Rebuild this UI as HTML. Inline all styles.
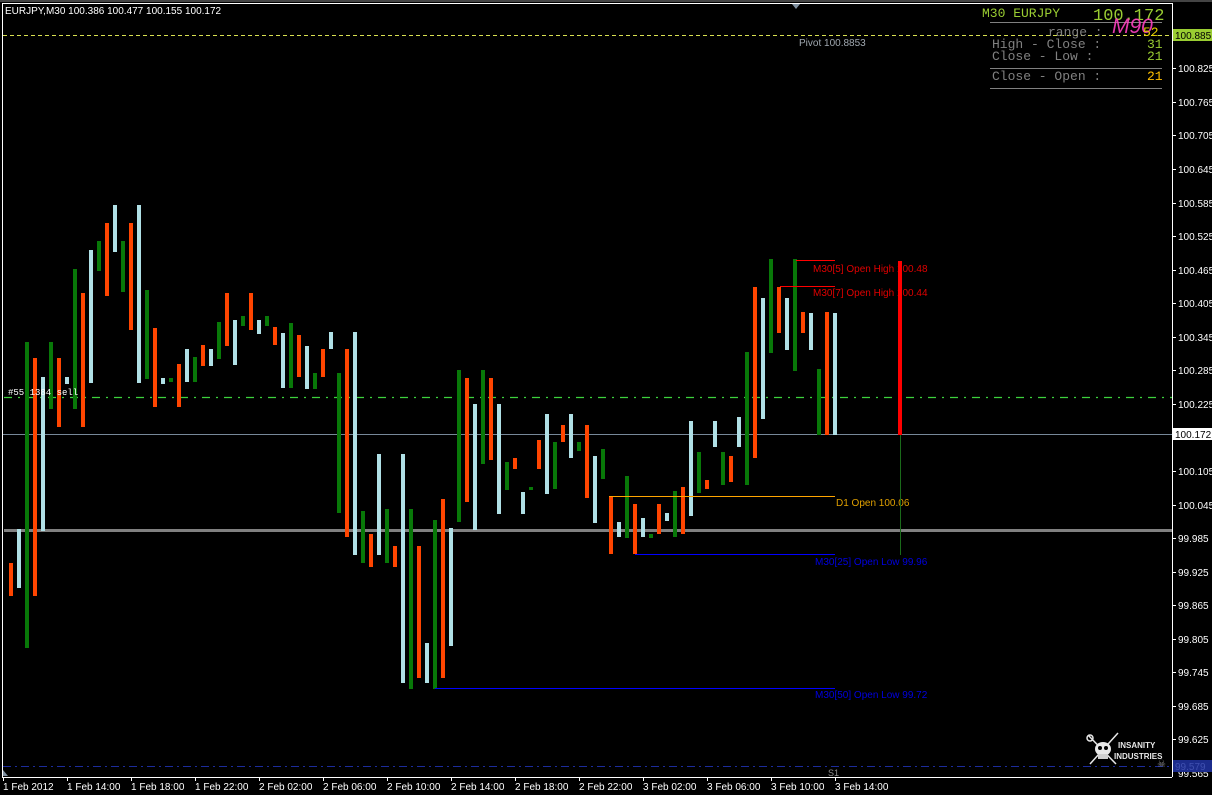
<!DOCTYPE html>
<html><head><meta charset="utf-8">
<style>
html,body{margin:0;padding:0;background:#000;width:1212px;height:795px;overflow:hidden}
svg{display:block}
text{font-family:"Liberation Sans",sans-serif}
.ax{fill:#fff;font-size:10px}
.mono{font-family:"Liberation Mono",monospace}
</style></head><body>
<svg width="1212" height="795" viewBox="0 0 1212 795" xmlns="http://www.w3.org/2000/svg">
<rect width="1212" height="795" fill="#000"/>
<rect x="0" y="0" width="1212" height="2" fill="#444"/>
<line x1="2.5" y1="3.5" x2="1172.5" y2="3.5" stroke="#fff"/>
<line x1="2.5" y1="3" x2="2.5" y2="777" stroke="#fff"/>
<line x1="1172.5" y1="3" x2="1172.5" y2="777" stroke="#fff"/>
<line x1="2" y1="777.5" x2="1172" y2="777.5" stroke="#fff"/>
<polygon points="792,4 800,4 796,9" fill="#8090a0"/>

<line x1="3" y1="35.5" x2="1172" y2="35.5" stroke="#d8e050" stroke-dasharray="4,3"/>
<text x="799" y="46" fill="#a0a8b0" font-size="10">Pivot 100.8853</text>
<line x1="4" y1="397.5" x2="1172" y2="397.5" stroke="#3cd23c" stroke-width="1.2" stroke-dasharray="8,6,2,6"/>
<line x1="3" y1="434.5" x2="1172" y2="434.5" stroke="#778899"/>
<rect x="4" y="529" width="1168" height="3" fill="#808080"/>
<line x1="3" y1="766.5" x2="1172" y2="766.5" stroke="#1c2c9c" stroke-dasharray="8,4,2,4"/>
<text x="828" y="776" fill="#909090" font-size="9">S1</text>

<g id="c">
<rect x="9" y="563" width="4" height="33" fill="#ff4500"/>
<rect x="17" y="529" width="4" height="59" fill="#b0e0e6"/>
<rect x="25" y="342" width="4" height="306" fill="#087808"/>
<rect x="33" y="358" width="4" height="238" fill="#ff4500"/>
<rect x="41" y="377" width="4" height="154" fill="#b0e0e6"/>
<rect x="49" y="342" width="4" height="67" fill="#087808"/>
<rect x="57" y="358" width="4" height="69" fill="#ff4500"/>
<rect x="65" y="377" width="4" height="7" fill="#b0e0e6"/>
<rect x="73" y="269" width="4" height="140" fill="#087808"/>
<rect x="81" y="293" width="4" height="134" fill="#ff4500"/>
<rect x="89" y="250" width="4" height="133" fill="#b0e0e6"/>
<rect x="97" y="241" width="4" height="30" fill="#087808"/>
<rect x="105" y="223" width="4" height="73" fill="#ff4500"/>
<rect x="113" y="205" width="4" height="47" fill="#b0e0e6"/>
<rect x="121" y="241" width="4" height="51" fill="#087808"/>
<rect x="129" y="223" width="4" height="107" fill="#ff4500"/>
<rect x="137" y="205" width="4" height="178" fill="#b0e0e6"/>
<rect x="145" y="290" width="4" height="89" fill="#087808"/>
<rect x="153" y="328" width="4" height="79" fill="#ff4500"/>
<rect x="161" y="378" width="4" height="6" fill="#b0e0e6"/>
<rect x="169" y="378" width="4" height="4" fill="#087808"/>
<rect x="177" y="364" width="4" height="43" fill="#ff4500"/>
<rect x="185" y="349" width="4" height="33" fill="#b0e0e6"/>
<rect x="193" y="357" width="4" height="25" fill="#087808"/>
<rect x="201" y="345" width="4" height="21" fill="#ff4500"/>
<rect x="209" y="349" width="4" height="17" fill="#b0e0e6"/>
<rect x="217" y="322" width="4" height="37" fill="#087808"/>
<rect x="225" y="293" width="4" height="53" fill="#ff4500"/>
<rect x="233" y="320" width="4" height="45" fill="#b0e0e6"/>
<rect x="241" y="316" width="4" height="10" fill="#087808"/>
<rect x="249" y="293" width="4" height="37" fill="#ff4500"/>
<rect x="257" y="320" width="4" height="14" fill="#b0e0e6"/>
<rect x="265" y="316" width="4" height="10" fill="#087808"/>
<rect x="273" y="327" width="4" height="18" fill="#ff4500"/>
<rect x="281" y="333" width="4" height="55" fill="#b0e0e6"/>
<rect x="289" y="323" width="4" height="65" fill="#087808"/>
<rect x="297" y="335" width="4" height="42" fill="#ff4500"/>
<rect x="305" y="346" width="4" height="43" fill="#b0e0e6"/>
<rect x="313" y="373" width="4" height="16" fill="#087808"/>
<rect x="321" y="349" width="4" height="28" fill="#ff4500"/>
<rect x="329" y="332" width="4" height="17" fill="#b0e0e6"/>
<rect x="337" y="373" width="4" height="140" fill="#087808"/>
<rect x="345" y="349" width="4" height="188" fill="#ff4500"/>
<rect x="353" y="332" width="4" height="223" fill="#b0e0e6"/>
<rect x="361" y="511" width="4" height="52" fill="#087808"/>
<rect x="369" y="534" width="4" height="33" fill="#ff4500"/>
<rect x="377" y="454" width="4" height="101" fill="#b0e0e6"/>
<rect x="385" y="509" width="4" height="54" fill="#087808"/>
<rect x="393" y="546" width="4" height="21" fill="#ff4500"/>
<rect x="401" y="454" width="4" height="229" fill="#b0e0e6"/>
<rect x="409" y="509" width="4" height="180" fill="#087808"/>
<rect x="417" y="546" width="4" height="132" fill="#ff4500"/>
<rect x="425" y="643" width="4" height="40" fill="#b0e0e6"/>
<rect x="433" y="520" width="4" height="169" fill="#087808"/>
<rect x="441" y="499" width="4" height="179" fill="#ff4500"/>
<rect x="449" y="528" width="4" height="118" fill="#b0e0e6"/>
<rect x="457" y="370" width="4" height="152" fill="#087808"/>
<rect x="465" y="378" width="4" height="124" fill="#ff4500"/>
<rect x="473" y="404" width="4" height="126" fill="#b0e0e6"/>
<rect x="481" y="370" width="4" height="94" fill="#087808"/>
<rect x="489" y="378" width="4" height="82" fill="#ff4500"/>
<rect x="497" y="404" width="4" height="110" fill="#b0e0e6"/>
<rect x="505" y="462" width="4" height="28" fill="#087808"/>
<rect x="513" y="458" width="4" height="11" fill="#ff4500"/>
<rect x="521" y="492" width="4" height="22" fill="#b0e0e6"/>
<rect x="529" y="487" width="4" height="3" fill="#087808"/>
<rect x="537" y="440" width="4" height="29" fill="#ff4500"/>
<rect x="545" y="414" width="4" height="80" fill="#b0e0e6"/>
<rect x="553" y="442" width="4" height="47" fill="#087808"/>
<rect x="561" y="425" width="4" height="17" fill="#ff4500"/>
<rect x="569" y="414" width="4" height="44" fill="#b0e0e6"/>
<rect x="577" y="442" width="4" height="9" fill="#087808"/>
<rect x="585" y="425" width="4" height="73" fill="#ff4500"/>
<rect x="593" y="456" width="4" height="67" fill="#b0e0e6"/>
<rect x="601" y="449" width="4" height="30" fill="#087808"/>
<rect x="609" y="497" width="4" height="57" fill="#ff4500"/>
<rect x="617" y="522" width="4" height="15" fill="#b0e0e6"/>
<rect x="625" y="476" width="4" height="62" fill="#087808"/>
<rect x="633" y="504" width="4" height="50" fill="#ff4500"/>
<rect x="641" y="518" width="4" height="19" fill="#b0e0e6"/>
<rect x="649" y="534" width="4" height="4" fill="#087808"/>
<rect x="657" y="504" width="4" height="30" fill="#ff4500"/>
<rect x="665" y="513" width="4" height="8" fill="#b0e0e6"/>
<rect x="673" y="491" width="4" height="46" fill="#087808"/>
<rect x="681" y="487" width="4" height="47" fill="#ff4500"/>
<rect x="689" y="421" width="4" height="95" fill="#b0e0e6"/>
<rect x="697" y="452" width="4" height="41" fill="#087808"/>
<rect x="705" y="480" width="4" height="9" fill="#ff4500"/>
<rect x="713" y="421" width="4" height="26" fill="#b0e0e6"/>
<rect x="721" y="452" width="4" height="33" fill="#087808"/>
<rect x="729" y="456" width="4" height="26" fill="#ff4500"/>
<rect x="737" y="417" width="4" height="30" fill="#b0e0e6"/>
<rect x="745" y="352" width="4" height="133" fill="#087808"/>
<rect x="753" y="287" width="4" height="171" fill="#ff4500"/>
<rect x="761" y="298" width="4" height="121" fill="#b0e0e6"/>
<rect x="769" y="259" width="4" height="94" fill="#087808"/>
<rect x="777" y="287" width="4" height="46" fill="#ff4500"/>
<rect x="785" y="298" width="4" height="52" fill="#b0e0e6"/>
<rect x="793" y="259" width="4" height="112" fill="#087808"/>
<rect x="801" y="312" width="4" height="21" fill="#ff4500"/>
<rect x="809" y="313" width="4" height="37" fill="#b0e0e6"/>
<rect x="817" y="369" width="4" height="66" fill="#087808"/>
<rect x="825" y="312" width="4" height="123" fill="#ff4500"/>
<rect x="833" y="313" width="4" height="122" fill="#b0e0e6"/>
</g>

<line x1="796" y1="260.5" x2="835" y2="260.5" stroke="#ff0000"/>
<text x="813" y="272" fill="#e00000" font-size="10">M30[5] Open High 100.48</text>
<line x1="780" y1="286.5" x2="835" y2="286.5" stroke="#ff0000"/>
<text x="813" y="296" fill="#e00000" font-size="10">M30[7] Open High 100.44</text>
<line x1="609" y1="496.5" x2="835" y2="496.5" stroke="#ffa500"/>
<text x="836" y="506" fill="#e0a000" font-size="10">D1 Open 100.06</text>
<line x1="635" y1="554.5" x2="835" y2="554.5" stroke="#0000ff"/>
<text x="815" y="565" fill="#0000e0" font-size="10">M30[25] Open Low 99.96</text>
<line x1="435" y1="688.5" x2="835" y2="688.5" stroke="#0000ff"/>
<text x="815" y="698" fill="#0000e0" font-size="10">M30[50] Open Low 99.72</text>
<rect x="898" y="261" width="4" height="174" fill="#ff0000"/>
<line x1="900.5" y1="435" x2="900.5" y2="555" stroke="#1a6a1a"/>

<text x="8" y="395" fill="#fff" font-size="9" class="mono">#55 1384 sell</text>

<text x="982" y="17" fill="#9acd32" font-size="13" class="mono">M30 EURJPY</text>
<text x="1093" y="20" fill="#9acd32" font-size="17" class="mono">100.172</text>
<line x1="990" y1="22.5" x2="1162" y2="22.5" stroke="#808080"/>
<text x="1048" y="36" fill="#808080" font-size="13" class="mono">range :</text>
<text x="1112" y="33" fill="#ff40c0" font-size="21" font-family="Liberation Serif" font-style="italic" opacity="0.9">M90</text>
<text x="1143" y="36" fill="#e8d000" font-size="13" class="mono">52</text>
<text x="992" y="48" fill="#808080" font-size="13" class="mono">High - Close :</text>
<text x="1147" y="48" fill="#9acd32" font-size="13" class="mono">31</text>
<text x="992" y="60" fill="#808080" font-size="13" class="mono">Close - Low  :</text>
<text x="1147" y="60" fill="#9acd32" font-size="13" class="mono">21</text>
<line x1="990" y1="68.5" x2="1162" y2="68.5" stroke="#808080"/>
<text x="992" y="80" fill="#808080" font-size="13" class="mono">Close - Open :</text>
<text x="1147" y="80" fill="#ffc000" font-size="13" class="mono">21</text>
<line x1="990" y1="88.5" x2="1162" y2="88.5" stroke="#808080"/>

<g stroke="#e8e8e8" fill="none" stroke-width="1.5">
<line x1="1088" y1="735" x2="1116" y2="764"/>
<line x1="1118" y1="733" x2="1090" y2="764"/>
<circle cx="1090" cy="738" r="3"/>
</g>
<ellipse cx="1103" cy="749" rx="8" ry="7" fill="#e8e8e8"/>
<circle cx="1100" cy="748" r="2" fill="#000"/><circle cx="1106" cy="748" r="2" fill="#000"/>
<rect x="1098" y="754" width="10" height="5" fill="#d0d0d0"/>
<text x="1118" y="748" fill="#e8e8e8" font-size="8" font-family="Liberation Serif" font-weight="bold">INSANITY</text>
<text x="1114" y="759" fill="#e8e8e8" font-size="8" font-family="Liberation Serif" font-weight="bold">INDUSTRIES</text>
<text x="1157" y="767" fill="#888" font-size="10">☠</text>

<g class="ax">
<rect x="1173" y="29" width="39" height="12" fill="#9acd32"/>
<text x="1175" y="39" fill="#000" font-size="10">100.885</text>
<g fill="#fff">
<text x="1178" y="72">100.825</text>
<text x="1178" y="106">100.765</text>
<text x="1178" y="139">100.705</text>
<text x="1178" y="173">100.645</text>
<text x="1178" y="207">100.585</text>
<text x="1178" y="240">100.525</text>
<text x="1178" y="274">100.465</text>
<text x="1178" y="307">100.405</text>
<text x="1178" y="341">100.345</text>
<text x="1178" y="374">100.285</text>
<text x="1178" y="408">100.225</text>
<text x="1178" y="475">100.105</text>
<text x="1178" y="509">100.045</text>
<text x="1178" y="542">99.985</text>
<text x="1178" y="576">99.925</text>
<text x="1178" y="609">99.865</text>
<text x="1178" y="643">99.805</text>
<text x="1178" y="676">99.745</text>
<text x="1178" y="710">99.685</text>
<text x="1178" y="743">99.625</text>
<text x="1178" y="777">99.565</text>
</g>
<rect x="1173" y="428" width="39" height="12" fill="#fff"/>
<text x="1175" y="438" fill="#000">100.172</text>
<rect x="1173" y="760" width="39" height="12" fill="#1c2c8c"/>
<text x="1175" y="770" fill="#4050b0">99.579</text>
</g>
<g stroke="#fff">
<line x1="1173" y1="68.5" x2="1176" y2="68.5"/><line x1="1173" y1="102.5" x2="1176" y2="102.5"/>
<line x1="1173" y1="135.5" x2="1176" y2="135.5"/><line x1="1173" y1="169.5" x2="1176" y2="169.5"/>
<line x1="1173" y1="203.5" x2="1176" y2="203.5"/><line x1="1173" y1="236.5" x2="1176" y2="236.5"/>
<line x1="1173" y1="270.5" x2="1176" y2="270.5"/><line x1="1173" y1="303.5" x2="1176" y2="303.5"/>
<line x1="1173" y1="337.5" x2="1176" y2="337.5"/><line x1="1173" y1="370.5" x2="1176" y2="370.5"/>
<line x1="1173" y1="404.5" x2="1176" y2="404.5"/><line x1="1173" y1="471.5" x2="1176" y2="471.5"/>
<line x1="1173" y1="505.5" x2="1176" y2="505.5"/><line x1="1173" y1="538.5" x2="1176" y2="538.5"/>
<line x1="1173" y1="572.5" x2="1176" y2="572.5"/><line x1="1173" y1="605.5" x2="1176" y2="605.5"/>
<line x1="1173" y1="639.5" x2="1176" y2="639.5"/><line x1="1173" y1="672.5" x2="1176" y2="672.5"/>
<line x1="1173" y1="706.5" x2="1176" y2="706.5"/><line x1="1173" y1="739.5" x2="1176" y2="739.5"/>
</g>

<g stroke="#fff">
<line x1="3.5" y1="777" x2="3.5" y2="781"/><line x1="67.5" y1="777" x2="67.5" y2="781"/>
<line x1="131.5" y1="777" x2="131.5" y2="781"/><line x1="195.5" y1="777" x2="195.5" y2="781"/>
<line x1="259.5" y1="777" x2="259.5" y2="781"/><line x1="323.5" y1="777" x2="323.5" y2="781"/>
<line x1="387.5" y1="777" x2="387.5" y2="781"/><line x1="451.5" y1="777" x2="451.5" y2="781"/>
<line x1="515.5" y1="777" x2="515.5" y2="781"/><line x1="579.5" y1="777" x2="579.5" y2="781"/>
<line x1="643.5" y1="777" x2="643.5" y2="781"/><line x1="707.5" y1="777" x2="707.5" y2="781"/>
<line x1="771.5" y1="777" x2="771.5" y2="781"/><line x1="835.5" y1="777" x2="835.5" y2="781"/>
</g>
<g class="ax" fill="#fff">
<text x="3" y="790">1 Feb 2012</text>
<text x="67" y="790">1 Feb 14:00</text>
<text x="131" y="790">1 Feb 18:00</text>
<text x="195" y="790">1 Feb 22:00</text>
<text x="259" y="790">2 Feb 02:00</text>
<text x="323" y="790">2 Feb 06:00</text>
<text x="387" y="790">2 Feb 10:00</text>
<text x="451" y="790">2 Feb 14:00</text>
<text x="515" y="790">2 Feb 18:00</text>
<text x="579" y="790">2 Feb 22:00</text>
<text x="643" y="790">3 Feb 02:00</text>
<text x="707" y="790">3 Feb 06:00</text>
<text x="771" y="790">3 Feb 10:00</text>
<text x="835" y="790">3 Feb 14:00</text>
</g>
<polygon points="3,770 3,776 8,776" fill="#8090a0"/>

<text x="5" y="14" fill="#fff" font-size="10">EURJPY,M30  100.386 100.477 100.155 100.172</text>
</svg>
</body></html>
